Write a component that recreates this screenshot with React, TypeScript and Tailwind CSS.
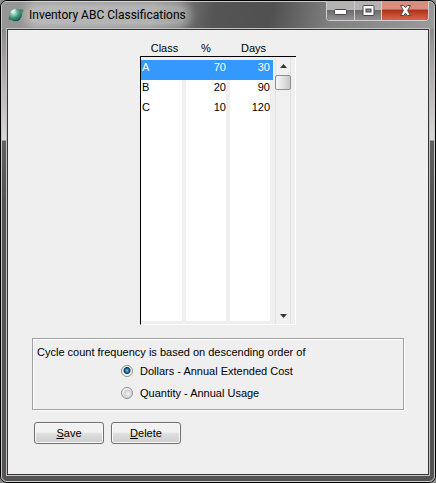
import React, { useState } from 'react';

const classes = [
  { name: 'A', percent: 70, days: 30 },
  { name: 'B', percent: 20, days: 90 },
  { name: 'C', percent: 10, days: 120 },
];

const bases = [
  { id: 'dollars', label: 'Dollars - Annual Extended Cost' },
  { id: 'quantity', label: 'Quantity - Annual Usage' },
];

const AppIcon = () => (
  <svg width="16" height="16" viewBox="0 0 16 16" aria-hidden="true">
    <defs>
      <radialGradient id="globe" cx="0.35" cy="0.3" r="0.75">
        <stop offset="0" stopColor="#e3f4ed" />
        <stop offset="0.4" stopColor="#6bb399" />
        <stop offset="0.8" stopColor="#17735a" />
        <stop offset="1" stopColor="#0d5140" />
      </radialGradient>
    </defs>
    <path d="M0.500 12.500C0 10.500 3 7 7 4.500C11 2 15 1.500 15.500 3.200C16 5 12.500 8.500 8.500 11C5 13 1.500 14 0.500 12.500Z" fill="#4d7568" />
    <circle cx="7.500" cy="8" r="6.300" fill="url(#globe)" />
    <path d="M2 12C6 12 12 8 14.800 3.800" fill="none" stroke="#3d8a72" strokeWidth="1" />
    <path d="M3.400 5.500C4.300 3.800 5.800 3 7.600 2.900" fill="none" stroke="#f1faf6" strokeWidth="1.300" />
  </svg>
);

const WindowButtons = () => (
  <div className="flex h-5 overflow-hidden rounded-b-[4px] border border-t-0 border-[#d0d0d0] bg-[#303030]">
    <button type="button" aria-label="Minimize" className="flex w-7 items-center justify-center border-r border-[#d0d0d0] bg-linear-to-b from-[#b5b2b2] from-45% via-[#6f6c6e] via-50% to-[#929092]">
      <svg width="13" height="8" viewBox="0 0 13 8">
        <rect x="0.5" y="2.5" width="12" height="5" rx="1" fill="#fff" stroke="#45474f" />
      </svg>
    </button>
    <button type="button" aria-label="Maximize" className="flex w-[27px] items-center justify-center border-r border-[#d0d0d0] bg-linear-to-b from-[#b5b2b2] from-45% via-[#6f6c6e] via-50% to-[#929092]">
      <svg width="13" height="11" viewBox="0 0 13 11">
        <rect x="1" y="0.5" width="11" height="10" rx="1" fill="#fff" stroke="#45474f" />
        <rect x="4" y="4" width="5" height="3" fill="#8b8b90" stroke="#45474f" />
      </svg>
    </button>
    <button type="button" aria-label="Close" className="flex w-[46px] items-center justify-center bg-linear-to-b from-[#d98f80] from-40% via-[#b5301a] via-50% to-[#d0694a]">
      <svg width="13" height="11" viewBox="0 0 13 11">
        <path d="M1.500 0.500H4.700L6.500 2.700L8.300 0.500H11.500L8.600 5.500L11.500 10.500H8.300L6.500 8.200L4.700 10.500H1.500L4.400 5.500Z" fill="#fff" stroke="#50424a" />
      </svg>
    </button>
  </div>
);

const ScrollBar = () => (
  <div className="flex h-[267px] w-4 flex-col border-x border-[#e3e3e3] bg-[#f0f0f0]">
    <button type="button" aria-label="Scroll up" className="flex h-[18px] items-center justify-center">
      <svg width="7" height="4" viewBox="0 0 7 4">
        <path d="M3.500 0L7 4H0Z" fill="#333" />
      </svg>
    </button>
    <div className="-mx-px h-[15px] rounded-[2px] border border-[#8e8e8e] bg-linear-to-r from-[#f8f8f8] via-[#e2e2e4] to-[#c8c8cc]" />
    <button type="button" aria-label="Scroll down" className="mt-auto flex h-[17px] items-center justify-center">
      <svg width="7" height="4" viewBox="0 0 7 4">
        <path d="M3.500 4L0 0H7Z" fill="#333" />
      </svg>
    </button>
  </div>
);

const ClassTable = () => {
  const [selected, setSelected] = useState('A');

  return (
    <table className="mx-auto w-[156px] table-fixed border-separate border-spacing-0">
      <colgroup>
        <col className="w-[46px]" />
        <col className="w-[44px]" />
        <col className="w-[43px]" />
        <col className="w-[23px]" />
      </colgroup>
      <thead>
        <tr className="leading-4">
          <th className="border-b border-black p-0 pt-[10px] pl-[3px] font-normal">Class</th>
          <th className="border-b border-black p-0 pt-[10px] pr-1 font-normal">%</th>
          <th className="border-b border-black p-0 pt-[10px] pl-1 font-normal">Days</th>
          <th className="border-b border-black p-0" aria-label="Scroll" />
        </tr>
      </thead>
      <tbody>
        <tr className="h-[3px]">
          <td className="border-l border-black p-0" />
          <td className="p-0" />
          <td className="p-0" />
          <td rowSpan={6} className="border-r border-b border-white p-0 pl-[2px] align-top">
            <ScrollBar />
          </td>
        </tr>
        {classes.map((row) => {
          const active = row.name === selected;
          const tone = active ? 'border-[#3399ff] bg-[#3399ff] text-white' : 'border-[#efefef] bg-white';
          return (
            <tr key={row.name} className="h-5 cursor-default align-top leading-3.5" onClick={() => setSelected(row.name)}>
              <td className="border-l border-black p-0">
                <div className={`h-5 border-r-4 pl-px ${tone}`}>{row.name}</div>
              </td>
              <td className="p-0">
                <div className={`h-5 border-r-4 text-right ${tone}`}>{row.percent}</div>
              </td>
              <td className="p-0">
                <div className={`h-5 border-r-3 text-right ${tone}`}>{row.days}</div>
              </td>
            </tr>
          );
        })}
        <tr className="h-[200px]">
          <td className="border-r-4 border-l border-r-[#efefef] border-l-black bg-white p-0" />
          <td className="border-r-4 border-[#efefef] bg-white p-0" />
          <td className="border-r-3 border-[#efefef] bg-white p-0" />
        </tr>
        <tr className="h-1">
          <td className="border-b border-l border-b-white border-l-black p-0" />
          <td className="border-b border-white p-0" />
          <td className="border-b border-white p-0" />
        </tr>
      </tbody>
    </table>
  );
};

const App = () => {
  const [basis, setBasis] = useState('dollars');

  return (
    <div className="min-h-screen bg-[#8c8c8c] font-['Liberation_Sans',Arial,sans-serif] text-[11px] text-black">
      <div className="flex min-h-screen flex-col rounded-[7px] border border-black">
        <div className="flex flex-1 flex-col rounded-[6px] border border-[#c9c9c9] bg-[linear-gradient(to_bottom,#8d8a8b_28px,#a8a4a4_60px,#dcd8d8_138px,#615f60_139px,#545253_200px,#545253)]">
          <header className="-mb-px flex h-[27px] items-start justify-between rounded-t-[5px] bg-[linear-gradient(100deg,#969696,#8a8a8a_35%,#555_49%,#505050_62%,#808080_76%,#9a9a9a)] pl-[6px]">
            <div className="flex items-center gap-[5px] pt-1">
              <AppIcon />
              <h1 className="rounded-full bg-white/35 font-[Roboto,'Open_Sans',sans-serif] text-[12px] leading-[18px] shadow-[0_0_8px_5px_rgba(255,255,255,0.35)]">
                Inventory ABC Classifications
              </h1>
            </div>
            <div className="-mt-px pr-[5px]">
              <WindowButtons />
            </div>
          </header>
          <div className="mx-1 mb-[5px] flex flex-1 flex-col border border-[#c4c4c4]">
            <main className="flex-1 border border-[#333] bg-[#efefef]">
              <ClassTable />
              <fieldset className="mx-6 mt-[13px] border border-[#a0a0a0] px-1 pt-[5px] pb-2 shadow-[1px_1px_0_white,inset_1px_1px_0_white]">
                <p className="leading-4">Cycle count frequency is based on descending order of</p>
                <div className="flex flex-col gap-[6px] pt-[3px] pl-[84px]">
                  {bases.map((item) => (
                    <label key={item.id} className="flex items-center gap-[7px] leading-4">
                      <input
                        type="radio"
                        name="basis"
                        checked={basis === item.id}
                        onChange={() => setBasis(item.id)}
                        className="size-3 appearance-none rounded-full border border-[#8e8f8f] bg-[radial-gradient(circle_at_60%_60%,#f2f2f2,#d0d3d6_45%,#f4f4f4_65%)] checked:bg-[radial-gradient(circle_at_50%_45%,#7fd0ee_0px,#1c6a95_2px,#12354f_3px,#f4f4f4_4px)]"
                      />
                      {item.label}
                    </label>
                  ))}
                </div>
              </fieldset>
              <div className="mx-6 mt-3 mb-6 flex gap-[7px] pl-[2px]">
                <button type="button" className="h-[22px] w-[70px] rounded-[3px] border border-[#707070] bg-linear-to-b from-[#f2f2f2] from-45% via-[#dddddd] via-55% to-[#cfcfcf] shadow-[inset_0_0_0_1px_#fafafa]">
                  <u>S</u>ave
                </button>
                <button type="button" className="h-[22px] w-[70px] rounded-[3px] border border-[#707070] bg-linear-to-b from-[#f2f2f2] from-45% via-[#dddddd] via-55% to-[#cfcfcf] shadow-[inset_0_0_0_1px_#fafafa]">
                  <u>D</u>elete
                </button>
              </div>
            </main>
          </div>
        </div>
      </div>
    </div>
  );
};

export default App;
